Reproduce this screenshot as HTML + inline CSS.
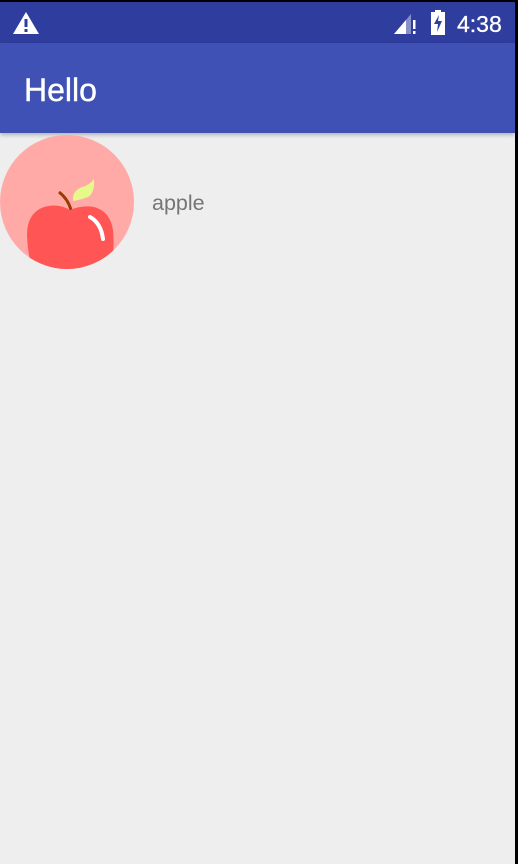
<!DOCTYPE html>
<html><head><style>
html,body{margin:0;padding:0;}
body{width:518px;height:864px;background:#000;position:relative;overflow:hidden;font-family:"Liberation Sans",sans-serif;}
#main{position:absolute;left:0;top:2px;width:515px;height:862px;background:#eeeeee;}
#sb{position:absolute;left:0;top:0;width:515px;height:41px;background:#2f3d9e;}
#ab{position:absolute;left:0;top:41px;width:515px;height:90px;background:#3f51b5;box-shadow:0 2px 4px rgba(0,0,0,0.25);}
#title{position:absolute;left:24px;top:29px;color:#fff;font-size:32px;-webkit-text-stroke:0.4px #fff;}
#time{position:absolute;left:457px;top:9px;color:#fff;font-size:23px;-webkit-text-stroke:0.3px #fff;}
#label{position:absolute;left:152px;top:189px;color:#757575;font-size:21.5px;}
</style></head><body>
<div id="main">
<div id="sb">
<svg style="position:absolute;left:13px;top:9px" width="28" height="24" viewBox="0 0 28 24"><path d="M13 1 L26 23 L0 23 Z" fill="#fff"/><rect x="11.5" y="8" width="3" height="8" fill="#2f3d9e"/><rect x="11.5" y="18" width="3" height="3" fill="#2f3d9e"/></svg>
<svg style="position:absolute;left:393px;top:10px" width="24" height="24" viewBox="0 0 24 24"><path d="M1 22 L18 2 L18 22 Z" fill="#8891c7"/><path d="M1 22 L13 8 L13 22 Z" fill="#fff"/><rect x="20" y="8" width="2.5" height="9" fill="#fff"/><rect x="20" y="19" width="2.5" height="3" fill="#fff"/></svg>
<svg style="position:absolute;left:430px;top:8px" width="16" height="26" viewBox="0 0 16 26"><rect x="5" y="0" width="6" height="3" fill="#fff"/><rect x="1" y="2" width="14" height="23" fill="#fff"/><path d="M9 5 L4 14 L8 14 L7 22 L12 11 L8 11 Z" fill="#2f3d9e"/></svg>
<div id="time">4:38</div>
</div>
<div id="ab"><div id="title">Hello</div></div>
<svg style="position:absolute;left:0;top:133px" width="136" height="136" viewBox="0 0 136 136">
<defs><clipPath id="c"><circle cx="67" cy="67" r="67"/></clipPath></defs>
<circle cx="67" cy="67" r="67" fill="#ffaaa7"/>
<g clip-path="url(#c)">
<path d="M59 57 Q68 64 71 75" stroke="#9a3a00" stroke-width="3" fill="none"/>
<path d="M73 66 Q72 56 82 52 Q90 50 94 44 Q95 58 88 62 Q80 65 73 66 Z" fill="#e6f98a"/>
<path d="M70 75 Q58 68 44 72 Q27 78 27 100 Q28 125 35 140 L110 140 Q115 115 113 95 Q110 76 94 72 Q82 70 70 75 Z" fill="#ff5555"/>
<path d="M90 82 Q101 88 103 104" stroke="#fff" stroke-width="4" fill="none" stroke-linecap="round"/>
</g>
</svg>
<div id="label">apple</div>
</div>
</body></html>
